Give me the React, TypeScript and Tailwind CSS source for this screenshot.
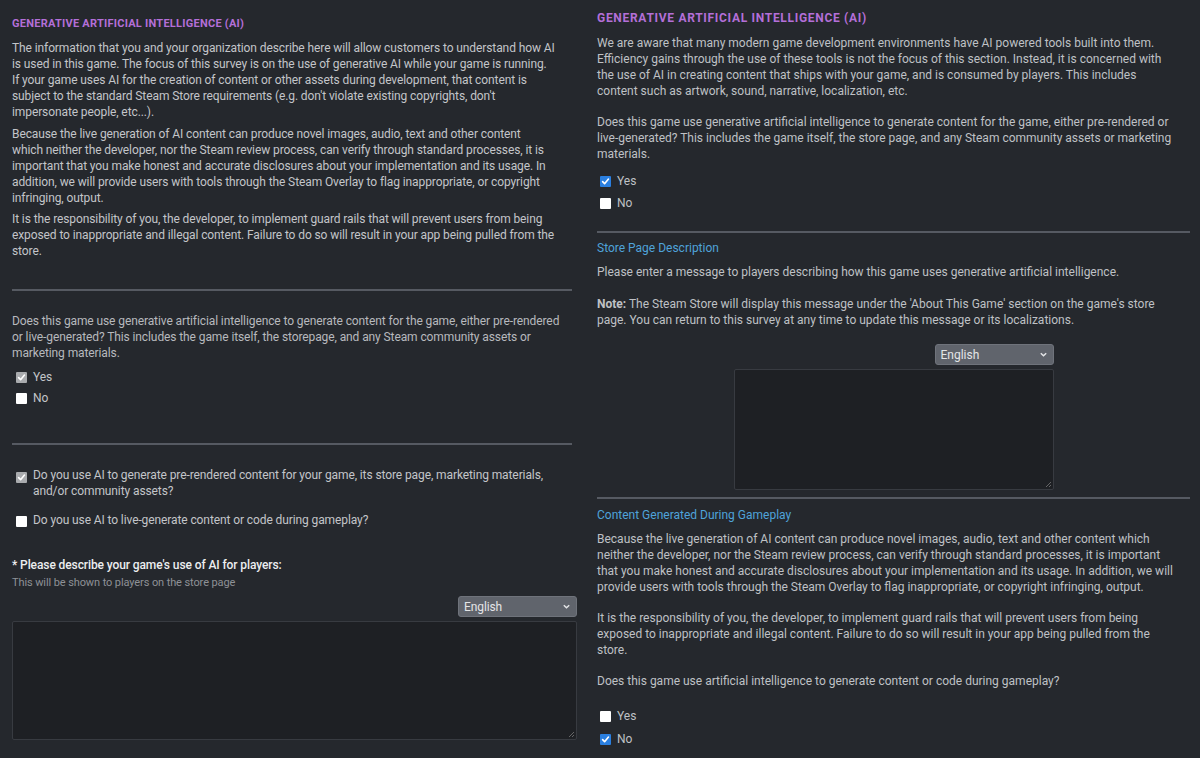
import React from "react";

const Check = ({ checked, tone }: { checked: boolean; tone: "gray" | "blue" }) => {
  if (!checked) {
    return <span className="inline-block w-[11px] h-[11px] bg-white rounded-[1px] shrink-0" />;
  }
  return (
    <span
      className={
        tone === "blue"
          ? "inline-flex items-center justify-center w-[11px] h-[11px] bg-[#2a7fe0] rounded-[1px] shrink-0"
          : "inline-flex items-center justify-center w-[11px] h-[11px] bg-[#a9abae] rounded-[1px] shrink-0"
      }
    >
      <svg width="9" height="9" viewBox="0 0 10 10">
        <path d="M1.8 5.2 L4 7.4 L8.3 2.3" fill="none" stroke="white" strokeWidth="1.8" strokeLinecap="round" strokeLinejoin="round" />
      </svg>
    </span>
  );
};

const Select = () => (
  <div className="flex items-center justify-between w-[119px] h-[21px] bg-[#60646c] border border-[#6f737b] rounded-[3px] pl-[5px] pr-[5px] text-[12px] text-[#e4e5e7]">
    <span>English</span>
    <svg width="9" height="9" viewBox="0 0 10 10">
      <path d="M2 3.5 L5 6.5 L8 3.5" fill="none" stroke="#e4e5e7" strokeWidth="1.6" />
    </svg>
  </div>
);

const TextArea = ({ cls }: { cls: string }) => (
  <div className={"relative bg-[#1e2024] border border-[#383b41] rounded-[2px] " + cls}>
    <svg className="absolute right-[1px] bottom-[1px]" width="7" height="7" viewBox="0 0 7 7">
      <path d="M6 1 L1 6 M6 4 L4 6" stroke="#777" strokeWidth="0.8" />
    </svg>
  </div>
);

export default function App() {
  return (
    <div
      className="w-[1200px] h-[758px] overflow-hidden bg-[#25282d] flex text-[#c3c5c9]"
      style={{ fontFamily: "Roboto, 'Liberation Sans', sans-serif" }}
    >
      {/* LEFT */}
      <div className="w-[590px] pl-[12px] pr-[13px] pt-[16px] text-[12px] leading-[16px] tracking-[-0.1px]">
        <div className="text-[11px] leading-[16px] font-bold tracking-[0.25px] text-[#b46fd8]">
          GENERATIVE ARTIFICIAL INTELLIGENCE (AI)
        </div>
        <p className="mt-[8px] whitespace-nowrap">
          The information that you and your organization describe here will allow customers to understand how AI
          <br />
          is used in this game. The focus of this survey is on the use of generative AI while your game is running.
          <br />
          If your game uses AI for the creation of content or other assets during development, that content is
          <br />
          subject to the standard Steam Store requirements (e.g. don't violate existing copyrights, don't
          <br />
          impersonate people, etc...).
        </p>
        <p className="mt-[6px] whitespace-nowrap">
          Because the live generation of AI content can produce novel images, audio, text and other content
          <br />
          which neither the developer, nor the Steam review process, can verify through standard processes, it is
          <br />
          important that you make honest and accurate disclosures about your implementation and its usage. In
          <br />
          addition, we will provide users with tools through the Steam Overlay to flag inappropriate, or copyright
          <br />
          infringing, output.
        </p>
        <p className="mt-[5px] whitespace-nowrap">
          It is the responsibility of you, the developer, to implement guard rails that will prevent users from being
          <br />
          exposed to inappropriate and illegal content. Failure to do so will result in your app being pulled from the
          <br />
          store.
        </p>
        <div className="mt-[30px] mr-[5px] h-[2px] bg-[#565a62]" />
        <p className="mt-[22px] whitespace-nowrap text-[#b7b9bd]">
          Does this game use generative artificial intelligence to generate content for the game, either pre-rendered
          <br />
          or live-generated? This includes the game itself, the storepage, and any Steam community assets or
          <br />
          marketing materials.
        </p>
        <div className="mt-[8px] flex items-center gap-[6px] pl-[4px] h-[16px]">
          <Check checked tone="gray" />
          <span>Yes</span>
        </div>
        <div className="mt-[5px] flex items-center gap-[6px] pl-[4px] h-[16px]">
          <Check checked={false} tone="gray" />
          <span>No</span>
        </div>
        <div className="mt-[37px] mr-[5px] h-[2px] bg-[#565a62]" />
        <div className="mt-[22px] flex gap-[6px] pl-[4px]">
          <span className="mt-[3px]">
            <Check checked tone="gray" />
          </span>
          <span className="whitespace-nowrap">
            Do you use AI to generate pre-rendered content for your game, its store page, marketing materials,
            <br />
            and/or community assets?
          </span>
        </div>
        <div className="mt-[13px] flex gap-[6px] pl-[4px]">
          <span className="mt-[3px]">
            <Check checked={false} tone="gray" />
          </span>
          <span>Do you use AI to live-generate content or code during gameplay?</span>
        </div>
        <div className="mt-[26px] text-[12px] leading-[16px] font-medium text-[#eceef0]">
          * Please describe your game's use of AI for players:
        </div>
        <div className="mt-[3px] text-[11px] leading-[14px] text-[#8e9196]">This will be shown to players on the store page</div>
        <div className="mt-[6px] flex justify-end">
          <Select />
        </div>
        <TextArea cls="mt-[4px] h-[119px]" />
      </div>

      {/* RIGHT */}
      <div className="flex-1 pl-[7px] pr-[10px] pt-[10px] text-[12px] leading-[16px] text-[#bfc1c5]">
        <div className="text-[12px] leading-[16px] font-bold tracking-[0.7px] text-[#b46fd8]">
          GENERATIVE ARTIFICIAL INTELLIGENCE (AI)
        </div>
        <p className="mt-[9px] whitespace-nowrap">
          We are aware that many modern game development environments have AI powered tools built into them.
          <br />
          Efficiency gains through the use of these tools is not the focus of this section. Instead, it is concerned with
          <br />
          the use of AI in creating content that ships with your game, and is consumed by players. This includes
          <br />
          content such as artwork, sound, narrative, localization, etc.
        </p>
        <p className="mt-[15px] whitespace-nowrap">
          Does this game use generative artificial intelligence to generate content for the game, either pre-rendered or
          <br />
          live-generated? This includes the game itself, the store page, and any Steam community assets or marketing
          <br />
          materials.
        </p>
        <div className="mt-[11px] flex items-center gap-[6px] pl-[3px] h-[16px]">
          <Check checked tone="blue" />
          <span>Yes</span>
        </div>
        <div className="mt-[6px] flex items-center gap-[6px] pl-[3px] h-[16px]">
          <Check checked={false} tone="blue" />
          <span>No</span>
        </div>
        <div className="mt-[20px] h-[2px] bg-[#565a62]" />
        <div className="mt-[7px] text-[#4fa3da]">Store Page Description</div>
        <p className="mt-[8px]">Please enter a message to players describing how this game uses generative artificial intelligence.</p>
        <p className="mt-[16px] whitespace-nowrap">
          <span className="font-bold">Note:</span> The Steam Store will display this message under the 'About This Game' section on the game's store
          <br />
          page. You can return to this survey at any time to update this message or its localizations.
        </p>
        <div className="mt-[16px] flex justify-center">
          <div className="w-[320px]">
            <div className="flex justify-end">
              <Select />
            </div>
            <TextArea cls="mt-[4px] h-[121px]" />
          </div>
        </div>
        <div className="mt-[7px] h-[2px] bg-[#565a62]" />
        <div className="mt-[8px] text-[#4fa3da]">Content Generated During Gameplay</div>
        <p className="mt-[8px] whitespace-nowrap">
          Because the live generation of AI content can produce novel images, audio, text and other content which
          <br />
          neither the developer, nor the Steam review process, can verify through standard processes, it is important
          <br />
          that you make honest and accurate disclosures about your implementation and its usage. In addition, we will
          <br />
          provide users with tools through the Steam Overlay to flag inappropriate, or copyright infringing, output.
        </p>
        <p className="mt-[15px] whitespace-nowrap">
          It is the responsibility of you, the developer, to implement guard rails that will prevent users from being
          <br />
          exposed to inappropriate and illegal content. Failure to do so will result in your app being pulled from the
          <br />
          store.
        </p>
        <p className="mt-[15px]">Does this game use artificial intelligence to generate content or code during gameplay?</p>
        <div className="mt-[19px] flex items-center gap-[6px] pl-[3px] h-[16px]">
          <Check checked={false} tone="blue" />
          <span>Yes</span>
        </div>
        <div className="mt-[7px] flex items-center gap-[6px] pl-[3px] h-[16px]">
          <Check checked tone="blue" />
          <span>No</span>
        </div>
      </div>
    </div>
  );
}
